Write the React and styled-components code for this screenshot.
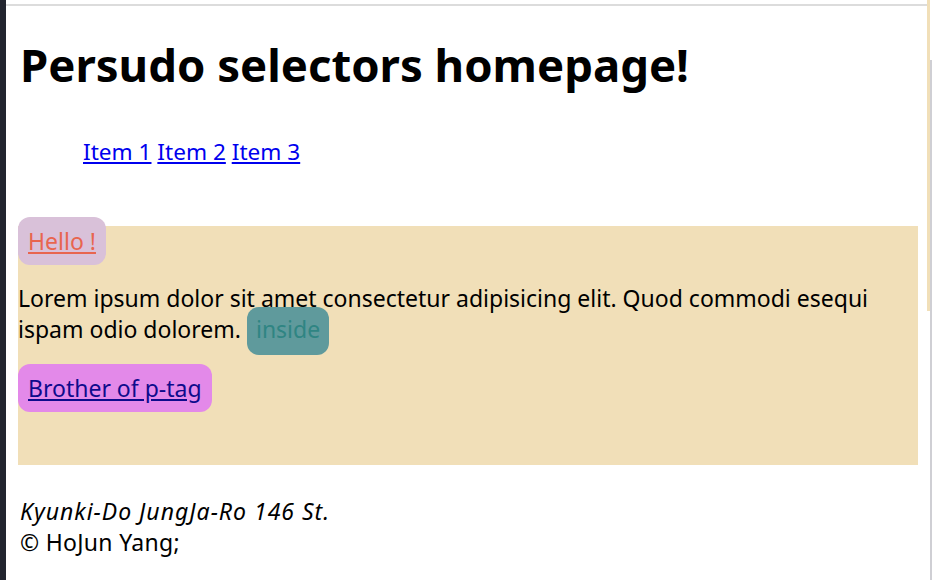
import React from 'react'
import styled, { createGlobalStyle } from 'styled-components'

const Global = createGlobalStyle`
html, body {
    margin:0;
    padding:0;
    background:#ffffff;
    width:934px;
    height:580px;
    overflow:hidden;
}
body {
    font-family:"Noto Sans", "Noto Sans CJK KR", sans-serif;
    color:#000000;
}
`;

function App() {
    return (
        <Frame>
            <Global />
            <LeftBar />
            <Viewport>
                <Title>Persudo selectors homepage!</Title>
                <Nav>
                    <NavItem><NavLink href="#">Item 1</NavLink></NavItem>{' '}
                    <NavItem><NavLink href="#">Item 2</NavLink></NavItem>{' '}
                    <NavItem><NavLink href="#">Item 3</NavLink></NavItem>
                </Nav>
                <Section>
                    <Row>
                        <Pill href="#" $bg="#d9c1d9" $fg="#e8654f">Hello !</Pill>
                    </Row>
                    <Paragraph>
                        Lorem ipsum dolor sit amet consectetur adipisicing elit. Quod commodi esequi ispam odio dolorem.{' '}
                        <Inside>inside</Inside>
                    </Paragraph>
                    <Row>
                        <Pill href="#" $bg="#e389e9" $fg="#0d0b8c">Brother of p-tag</Pill>
                    </Row>
                </Section>
                <Footer>
                    <Address>Kyunki-Do JungJa-Ro 146 St.</Address>
                    <Copy>© HoJun Yang;</Copy>
                </Footer>
            </Viewport>
            <RightEdge>
                <Strip />
                <Line />
            </RightEdge>
        </Frame>
    )
}

export default App

const Frame = styled.div`
display:flex;
width:934px;
height:580px;
`;

const LeftBar = styled.div`
width:6px;
flex-shrink:0;
background:#22252f;
`;

const Viewport = styled.div`
flex:1;
margin-top:4px;
border-top:2px solid #dcdcdc;
padding:0 9px 0 12px;
font-size:23px;
`;

const Title = styled.h1`
font-size:45.5px;
font-weight:700;
line-height:60px;
margin:28px 0 0 2px;
`;

const Nav = styled.ul`
list-style:none;
margin:42px 0 0 0;
padding:0 0 0 65px;
line-height:31px;
font-size:22.6px;
`;

const NavItem = styled.li`
display:inline;
`;

const NavLink = styled.a`
color:#0000ee;
text-decoration:underline;
`;

const Section = styled.section`
margin-top:59px;
background:#f1dfb8;
padding:0 0 62px 0;
`;

const Row = styled.div`
line-height:30px;
`;

const Pill = styled.a`
background:${p => p.$bg};
color:${p => p.$fg};
padding:8px 10px;
border-radius:12px;
text-decoration:underline;
`;

const Paragraph = styled.p`
margin:27px 0 28px 0;
line-height:31px;
`;

const Inside = styled.span`
background:#5f9a9c;
color:#2f8583;
padding:6px 9px 10px 9px;
border-radius:12px;
`;

const Footer = styled.footer`
margin-top:31px;
padding-left:2px;
line-height:31px;
`;

const Address = styled.address`
font-style:italic;
letter-spacing:1px;
`;

const Copy = styled.div`
letter-spacing:0.3px;
`;

const RightEdge = styled.div`
width:7px;
flex-shrink:0;
display:flex;
`;

const Strip = styled.div`
width:3px;
height:311px;
background:#f1dfb8;
`;

const Line = styled.div`
width:2px;
margin-top:60px;
background:#cfcfd4;
`;
